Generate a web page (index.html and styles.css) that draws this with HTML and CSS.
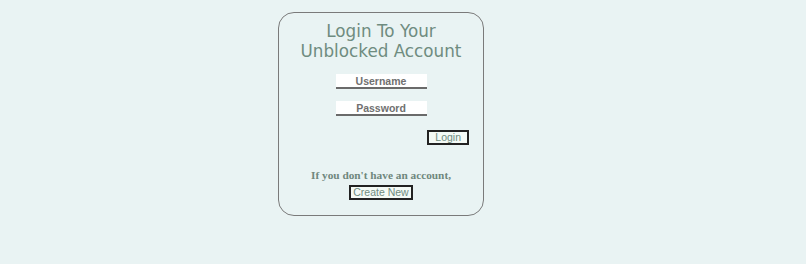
FILE: index.html
```html
<!DOCTYPE html>
<html>
<head>
    <title>Login</title>
    <link rel="stylesheet" href="styles.css">
</head>
<body>
    <div class="login-box">
        <h1 class="title">Login To Your Unblocked Account</h1>
        <form class="login-form">
            <input type="text" class="field" placeholder="Username">
            <input type="password" class="field" placeholder="Password">
            <div class="btn-row">
                <button type="button" class="btn btn-login">Login</button>
            </div>
        </form>
        <p class="note">If you don't have an account,</p>
        <button type="button" class="btn">Create New</button>
    </div>
</body>
</html>
```

FILE: styles.css
```css
body {
    margin: 0;
    background-color: #e9f3f3;
    font-family: "DejaVu Sans", Verdana, sans-serif;
}

.login-box {
    width: 204px;
    margin: 12px 0 0 278px;
    padding: 8px 0 15px;
    border: 1.5px solid #7a7a7a;
    border-radius: 16px;
    text-align: center;
}

.title {
    margin: 0 18px;
    font-size: 16.8px;
    font-weight: normal;
    line-height: 20px;
    color: #6f8c80;
}

.login-form {
    display: flex;
    flex-direction: column;
    align-items: center;
    gap: 12px;
    margin-top: 13px;
}

.field {
    width: 91px;
    height: 13px;
    padding: 0;
    border: none;
    border-bottom: 2px solid #6a6a6a;
    background: #fff;
    text-align: center;
    font-family: "Liberation Sans", Arial, sans-serif;
    font-size: 10.5px;
    font-weight: bold;
}

.field::placeholder {
    color: #707070;
}

.btn-row {
    align-self: stretch;
    display: flex;
    justify-content: flex-end;
    padding-right: 14px;
    margin-top: 2px;
}

.btn {
    padding: 0 2px;
    border: 2px solid #222;
    background: #f4faf6;
    color: #6f8c80;
    font-family: "Liberation Sans", Arial, sans-serif;
    font-size: 10.5px;
    line-height: 11px;
    height: 15px;
}

.btn-login {
    padding: 0 6px;
}

.note {
    margin: 24px 0 0;
    font-family: "Liberation Serif", "Times New Roman", serif;
    font-size: 11.3px;
    font-weight: bold;
    color: #6f877d;
}
```
